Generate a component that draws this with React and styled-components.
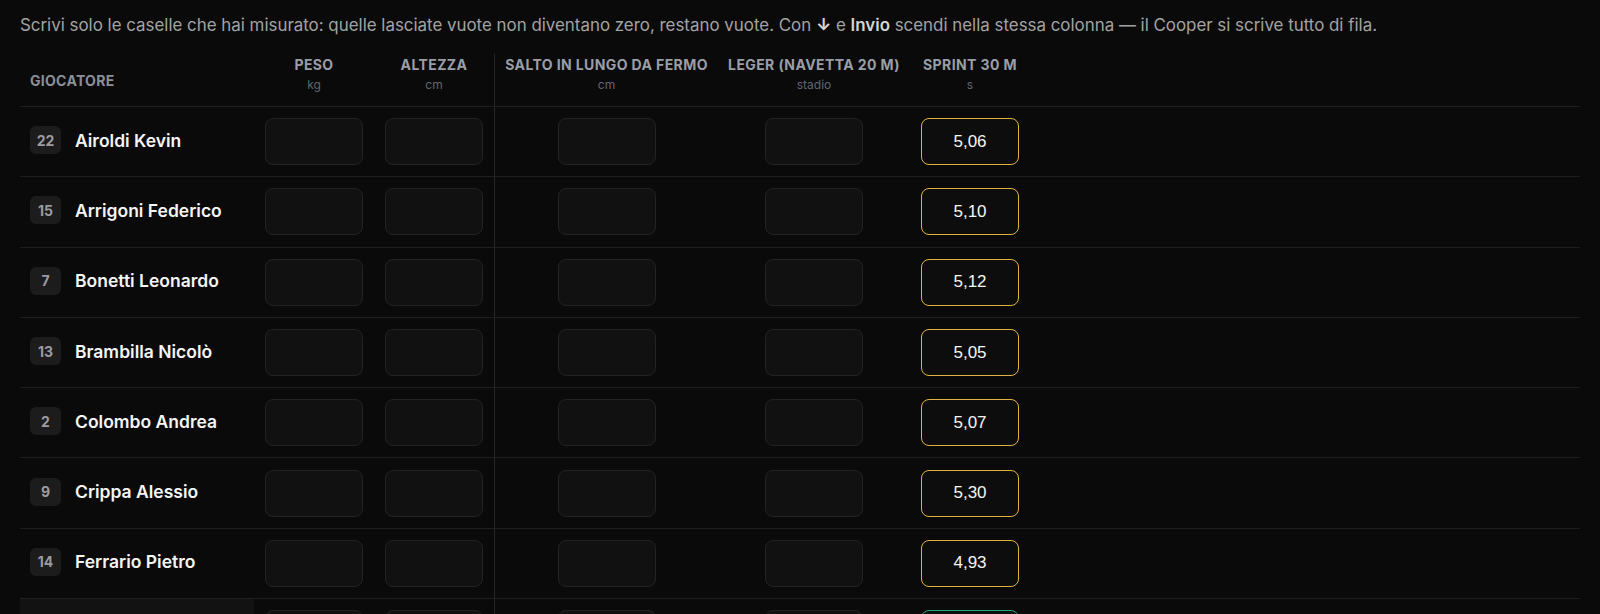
import React from 'react';
import styled, {createGlobalStyle} from 'styled-components';

const GlobalStyle = createGlobalStyle`
  body {
    margin: 0;
    background: #0a0a0a;
    font-family: Inter, "Noto Sans", sans-serif;
    color: #e5e5e5;
    overflow: hidden;
  }
`;

const columns = [
    {id: "peso", label: "Peso", unit: "kg"},
    {id: "altezza", label: "Altezza", unit: "cm"},
    {id: "salto", label: "Salto in lungo da fermo", unit: "cm", divider: true},
    {id: "leger", label: "Leger (navetta 20 m)", unit: "stadio"},
    {id: "sprint", label: "Sprint 30 m", unit: "s"},
];

const players = [
    {num: 22, name: "Airoldi Kevin", sprint: "5,06"},
    {num: 15, name: "Arrigoni Federico", sprint: "5,10"},
    {num: 7, name: "Bonetti Leonardo", sprint: "5,12"},
    {num: 13, name: "Brambilla Nicolò", sprint: "5,05"},
    {num: 2, name: "Colombo Andrea", sprint: "5,07"},
    {num: 9, name: "Crippa Alessio", sprint: "5,30"},
    {num: 14, name: "Ferrario Pietro", sprint: "4,93"},
    {num: 5, name: "Galbiati Marco", sprint: "4,81", good: true, highlight: true},
];

const App = () => {
    return (
        <Page>
            <GlobalStyle/>
            <Hint>
                Scrivi solo le caselle che hai misurato: quelle lasciate vuote non diventano zero, restano vuote. Con <Arrow>↓</Arrow> e <b>Invio</b> scendi nella stessa colonna — il Cooper si scrive tutto di fila.
            </Hint>
            <Table>
                <HeadRow>
                    <PlayerHead>Giocatore</PlayerHead>
                    {columns.map(c => (
                        <HeadCell key={c.id} $divider={c.divider}>
                            <HeadLabel>{c.label}</HeadLabel>
                            <HeadUnit>{c.unit}</HeadUnit>
                        </HeadCell>
                    ))}
                    <Filler/>
                </HeadRow>
                {players.map(p => (
                    <Row key={p.num}>
                        <PlayerCell $highlight={p.highlight}>
                            <Badge>{p.num}</Badge>
                            <Name>{p.name}</Name>
                        </PlayerCell>
                        {columns.map(c => (
                            <Cell key={c.id} $divider={c.divider}>
                                {c.id === "sprint"
                                    ? <Field $tone={p.good ? "good" : "warn"} defaultValue={p.sprint}/>
                                    : <Field defaultValue=""/>}
                            </Cell>
                        ))}
                        <Filler/>
                    </Row>
                ))}
            </Table>
        </Page>
    )
}

export default App;

const Page = styled.div`
  padding: 12px 20px 0;
`;

const Hint = styled.p`
  margin: 0 0 16px;
  font-size: 16.9px;
  line-height: 26px;
  color: #a3a3a3;

  b {
    color: #d4d4d4;
    font-weight: 600;
  }
`;

const Arrow = styled.span`
  color: #d4d4d4;
  font-weight: 700;
`;

const Table = styled.div`
  display: flex;
  flex-direction: column;
`;

const grid = `
  box-sizing: border-box;
  display: grid;
  grid-template-columns: 234px 120px 120px 224px 192px 120px 1fr;
  border-bottom: 1px solid #1f1f1f;
`;

const HeadRow = styled.div`
  ${grid};
  height: 53px;
`;

const PlayerHead = styled.div`
  display: flex;
  align-items: center;
  padding: 0 10px;
  font-size: 14px;
  font-weight: 700;
  letter-spacing: 0.3px;
  text-transform: uppercase;
  color: #8b8f98;
`;

const HeadCell = styled.div`
  display: flex;
  flex-direction: column;
  align-items: center;
  padding-top: 2px;
  border-left: ${props => props.$divider ? "1px solid #262626" : "none"};
`;

const HeadLabel = styled.span`
  font-size: 14px;
  line-height: 18px;
  font-weight: 700;
  letter-spacing: 0.4px;
  text-transform: uppercase;
  white-space: nowrap;
  color: #9a9ea6;
`;

const HeadUnit = styled.span`
  margin-top: 3px;
  font-size: 12px;
  line-height: 16px;
  color: #62666e;
`;

const Filler = styled.div``;

const Row = styled.div`
  ${grid};
  height: 70.3px;
`;

const PlayerCell = styled.div`
  display: flex;
  align-items: center;
  gap: 14px;
  padding: 0 10px 3px;
  background: ${props => props.$highlight ? "#121212" : "transparent"};
`;

const Badge = styled.span`
  display: inline-flex;
  align-items: center;
  justify-content: center;
  min-width: 31px;
  height: 28px;
  border-radius: 6px;
  background: #1c1c1d;
  font-size: 14px;
  font-weight: 700;
  color: #9b9ba1;
`;

const Name = styled.span`
  font-size: 17.5px;
  font-weight: 600;
  color: #f5f5f5;
  white-space: nowrap;
`;

const Cell = styled.div`
  display: flex;
  align-items: center;
  justify-content: center;
  border-left: ${props => props.$divider ? "1px solid #262626" : "none"};
`;

const toneBorder = {
    warn: "#e2b23f",
    good: "#1fa57b",
};

const Field = styled.input`
  box-sizing: border-box;
  width: 98px;
  height: 47px;
  border-radius: 8px;
  border: 1px solid ${props => props.$tone ? toneBorder[props.$tone] : "#232323"};
  background: ${props => props.$tone ? "#0d0d0d" : "#111111"};
  color: #f5f5f5;
  font-family: "Liberation Sans", Arial, sans-serif;
  font-size: 17px;
  text-align: center;
  outline: none;
`;
